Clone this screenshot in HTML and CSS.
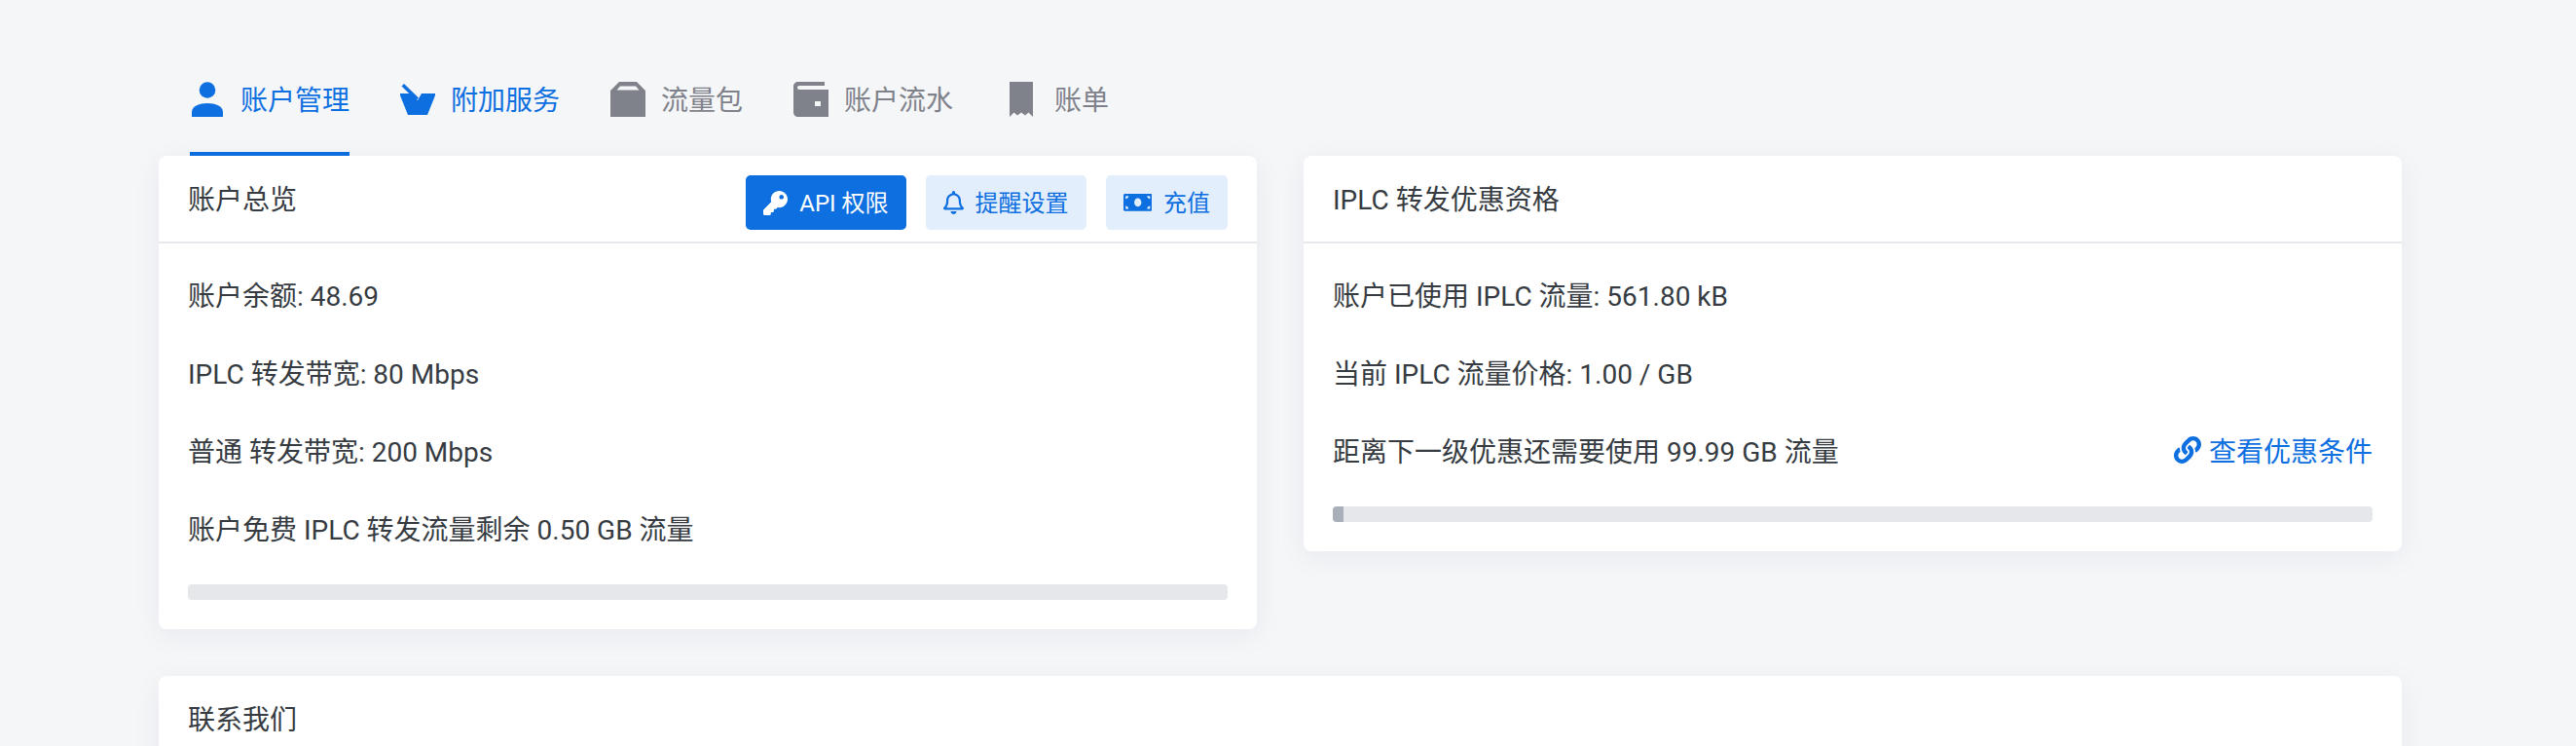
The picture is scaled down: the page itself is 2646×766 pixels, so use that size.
FILE: index.html
```html
<!DOCTYPE html>
<html lang="zh-CN">
<head>
  <meta charset="UTF-8">
  <meta name="viewport" content="width=device-width, initial-scale=1.0">
  <title>账户管理</title>
  <link rel="stylesheet" href="styles.css">
</head>
<body>

  <div class="page">
    <!-- Tabs -->
    <nav class="tabs">
      <a class="tab active">
        <svg class="tab-icon" viewBox="0 0 32 36"><circle cx="16" cy="8.5" r="8.3"/><path d="M0 36V31C0 25 8 22 16 22S32 25 32 31V36Z"/></svg>
        <span class="label">账户管理</span>
      </a>
      <a class="tab active">
        <svg class="tab-icon icon-basket" viewBox="0 0 36 32"><path d="M0 10H11L18 17L22 10H36V12L28 32H8L0 12Z"/><path d="M4 0L19 14.500L16.500 17L1.500 2.500Z"/></svg>
        <span class="label">附加服务</span>
      </a>
      <a class="tab">
        <svg class="tab-icon" viewBox="0 0 36 36"><path fill-rule="evenodd" d="M9 0H27L36 9V36H0V9ZM10 4.500L6.500 8.500H29.500L26 4.500Z"/></svg>
        <span class="label">流量包</span>
      </a>
      <a class="tab">
        <svg class="tab-icon" viewBox="0 0 36 36"><path fill-rule="evenodd" d="M5 0H32V4H6C4.500 4 4 5 4 6S5 8 6 8H36V36H5C2 36 0 34 0 31V5C0 2 2 0 5 0ZM22 20V25H28V20Z"/></svg>
        <span class="label">账户流水</span>
      </a>
      <a class="tab">
        <svg class="tab-icon" viewBox="0 0 24 36"><path d="M0 0H24V36L19.500 31.500L16 34.500L12 31.500L8 34.500L4.500 31.500L0 36Z"/></svg>
        <span class="label">账单</span>
      </a>
    </nav>

    <div class="columns">
      <!-- Account overview -->
      <section class="card">
        <header class="card-header">
          <h2>账户总览</h2>
          <div class="actions">
            <button class="btn btn-primary">
              <svg class="icon-key" viewBox="0 0 512 512"><path d="M512 176.001C512 273.203 433.202 352 336 352c-11.22 0-22.19-1.062-32.827-3.069l-24.012 27.014A23.999 23.999 0 0 1 261.223 384H224v40c0 13.255-10.745 24-24 24h-40v40c0 13.255-10.745 24-24 24H24c-13.255 0-24-10.745-24-24v-78.059c0-6.365 2.529-12.47 7.029-16.971l161.802-161.802C163.108 213.814 160 195.271 160 176 160 78.798 238.797.001 335.999 0 433.488-.001 512 78.511 512 176.001zM336 128c0 26.51 21.49 48 48 48s48-21.49 48-48-21.49-48-48-48-48 21.49-48 48z"/></svg>
              <span class="label">API 权限</span>
            </button>
            <button class="btn btn-light">
              <svg class="icon-bell" viewBox="0 0 448 512"><path d="M439.39 362.29c-19.32-20.76-55.47-51.99-55.47-154.29 0-77.7-54.48-139.9-127.94-155.16V32c0-17.67-14.32-32-31.98-32s-31.98 14.33-31.98 32v20.84C118.56 68.1 64.08 130.3 64.08 208c0 102.3-36.15 133.53-55.47 154.29-6 6.45-8.66 14.16-8.61 21.71.11 16.4 12.98 32 32.1 32h383.8c19.12 0 32-15.6 32.1-32 .05-7.55-2.61-15.27-8.61-21.71zM67.53 368c21.22-27.97 44.42-74.33 44.53-159.42 0-.2-.06-.38-.06-.58 0-61.86 50.14-112 112-112s112 50.14 112 112c0 .2-.06.38-.06.58.11 85.1 23.31 131.46 44.53 159.42H67.53zM224 512c35.32 0 63.97-28.65 63.97-64H160.03c0 35.35 28.65 64 63.97 64z"/></svg>
              <span class="label">提醒设置</span>
            </button>
            <button class="btn btn-light">
              <svg class="icon-money" viewBox="0 64 640 384"><path d="M608 64H32C14.33 64 0 78.33 0 96v320c0 17.67 14.33 32 32 32h576c17.67 0 32-14.33 32-32V96c0-17.67-14.33-32-32-32zM48 400v-64c35.35 0 64 28.65 64 64H48zm0-224v-64h64c0 35.35-28.65 64-64 64zm272 176c-44.19 0-80-42.99-80-96 0-53.02 35.82-96 80-96s80 42.98 80 96c0 53.03-35.83 96-80 96zm272 48h-64c0-35.35 28.65-64 64-64v64zm0-224c-35.35 0-64-28.65-64-64h64v64z"/></svg>
              <span class="label">充值</span>
            </button>
          </div>
        </header>
        <div class="card-body">
          <div class="row">账户余额: 48.69</div>
          <div class="row">IPLC 转发带宽: 80 Mbps</div>
          <div class="row">普通 转发带宽: 200 Mbps</div>
          <div class="row">账户免费 IPLC 转发流量剩余 0.50 GB 流量</div>
          <div class="progress"></div>
        </div>
      </section>

      <!-- IPLC discount -->
      <section class="card">
        <header class="card-header">
          <h2>IPLC 转发优惠资格</h2>
        </header>
        <div class="card-body">
          <div class="row">账户已使用 IPLC 流量: 561.80 kB</div>
          <div class="row">当前 IPLC 流量价格: 1.00 / GB</div>
          <div class="row">
            <span>距离下一级优惠还需要使用 99.99 GB 流量</span>
            <a class="link">
              <svg class="icon-link" viewBox="0 0 512 512"><path d="M326.612 185.391c59.747 59.809 58.927 155.698.36 214.59-.11.12-.24.25-.36.37l-67.2 67.2c-59.27 59.27-155.699 59.262-214.96 0-59.27-59.26-59.27-155.7 0-214.96l37.106-37.106c9.84-9.84 26.786-3.3 27.294 10.606.648 17.722 3.826 35.527 9.69 52.721 1.986 5.822.567 12.262-3.783 16.612l-13.087 13.087c-28.026 28.026-28.905 73.66-1.155 101.96 28.024 28.579 74.086 28.749 102.325.51l67.2-67.19c28.191-28.191 28.073-73.757 0-101.83-3.701-3.694-7.429-6.564-10.341-8.569a16.037 16.037 0 0 1-6.947-12.606c-.396-10.567 3.348-21.456 11.698-29.806l21.054-21.055c5.521-5.521 14.182-6.199 20.584-1.731a152.482 152.482 0 0 1 20.522 17.197zM467.547 44.449c-59.261-59.262-155.69-59.27-214.96 0l-67.2 67.2c-.12.12-.25.25-.36.37-58.566 58.892-59.387 154.781.36 214.59a152.454 152.454 0 0 0 20.521 17.196c6.402 4.468 15.064 3.789 20.584-1.731l21.054-21.055c8.35-8.35 12.094-19.239 11.698-29.806a16.037 16.037 0 0 0-6.947-12.606c-2.912-2.005-6.64-4.875-10.341-8.569-28.073-28.073-28.191-73.639 0-101.83l67.2-67.19c28.239-28.239 74.3-28.069 102.325.51 27.75 28.3 26.872 73.934-1.155 101.96l-13.087 13.087c-4.35 4.35-5.769 10.79-3.783 16.612 5.864 17.194 9.042 34.999 9.69 52.721.509 13.906 17.454 20.446 27.294 10.606l37.106-37.106c59.271-59.259 59.271-155.699.001-214.959z"/></svg>
              查看优惠条件
            </a>
          </div>
          <div class="progress"><div class="progress-fill" style="width: 1%"></div></div>
        </div>
      </section>
    </div>

    <!-- Contact -->
    <section class="card card-contact">
      <header class="card-header">
        <h2>联系我们</h2>
      </header>
    </section>
  </div>

</body>
</html>
```

FILE: styles.css
```css
html, body {
  margin: 0;
  height: 100%;
  overflow: hidden;
}

body {
  font-family: Roboto, "Noto Sans CJK SC", sans-serif;
  font-size: 28px;
  color: #363b42;
  background: #f5f6f8;
}

.page {
  padding: 60px 179px 0 163px;
}

/* Tabs */
.tabs {
  display: flex;
  gap: 52px;
  margin-left: 32px;
}

.tab {
  display: flex;
  align-items: center;
  gap: 16px;
  height: 36px;
  padding: 24px 0 36px;
  border-bottom: 4px solid transparent;
  color: #7f828a;
  fill: #7f828a;
}

.tab.active {
  color: #0d6fe0;
  fill: #0d6fe0;
}

.tab:first-child {
  border-bottom-color: #0d6fe0;
}

.tab-icon {
  width: 36px;
  height: 36px;
  flex-shrink: 0;
}

.label {
  margin-bottom: 3px;
}

/* Cards */
.columns {
  display: grid;
  grid-template-columns: 1fr 1fr;
  gap: 48px;
  align-items: start;
}

.card {
  background: white;
  border-radius: 8px;
  box-shadow: 0 6px 30px rgba(30, 40, 60, 0.06);
}

.card-contact {
  margin-top: 48px;
  height: 300px;
}

.card-header {
  display: flex;
  justify-content: space-between;
  align-items: center;
  height: 88px;
  padding: 0 30px;
  border-bottom: 2px solid #e6e7eb;
}

.card-header h2 {
  margin: 0 0 3px;
  font-size: 28px;
  font-weight: 400;
}

.card-body {
  display: flex;
  flex-direction: column;
  gap: 36px;
  padding: 30px;
}

.row {
  display: flex;
  justify-content: space-between;
  align-items: center;
  height: 44px;
}

.link {
  display: flex;
  align-items: center;
  gap: 8px;
  color: #0d6fe0;
  fill: #0d6fe0;
}

.icon-link {
  width: 28px;
  height: 28px;
}

/* Buttons */
.actions {
  display: flex;
  gap: 20px;
  margin-top: 8px;
}

.btn {
  display: flex;
  align-items: center;
  gap: 12px;
  height: 56px;
  padding: 0 18px;
  border: none;
  border-radius: 5px;
  font-family: inherit;
  font-size: 24px;
  cursor: pointer;
}

.btn-primary {
  background: #0d6fe0;
  color: white;
  fill: white;
}

.btn-light {
  background: #e2eefc;
  color: #0d6fe0;
  fill: #0d6fe0;
}

.icon-key {
  width: 25px;
  height: 25px;
}

.icon-bell {
  width: 21px;
  height: 24px;
}

.icon-money {
  width: 29.5px;
  height: 17.7px;
}

/* Progress */
.progress {
  height: 16px;
  border-radius: 4px;
  background: #e5e7ea;
  overflow: hidden;
}

.progress-fill {
  height: 100%;
  background: #a9afb8;
}
```
